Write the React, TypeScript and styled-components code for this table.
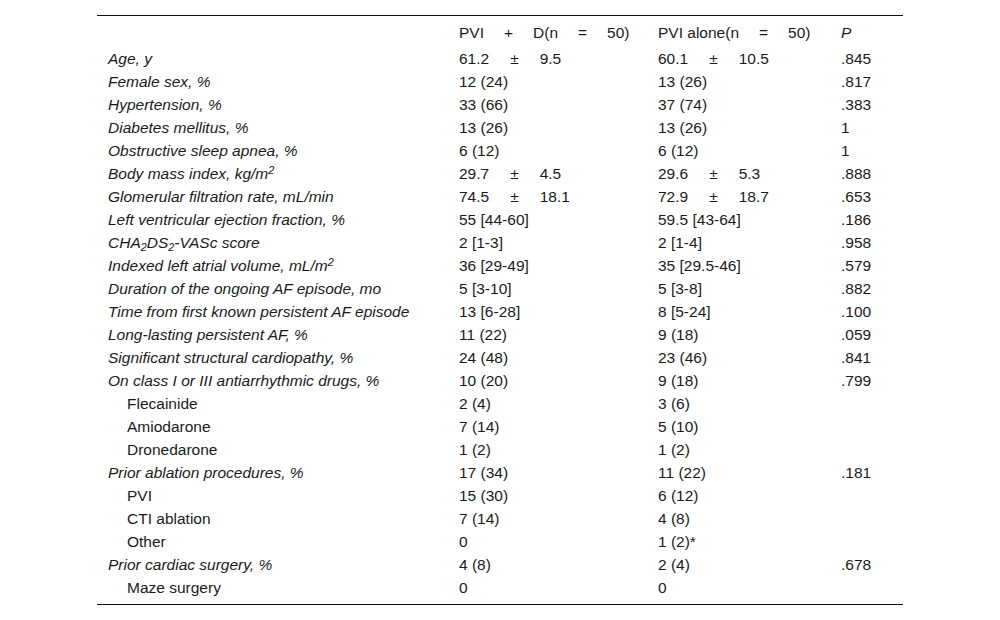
import React from "react";
import styled, { createGlobalStyle } from "styled-components";

const GlobalStyle = createGlobalStyle`
  body {
    margin: 0;
    background: #fff;
    font-family: "Liberation Sans", Arial, sans-serif;
    color: #1a1a1a;
  }
`;

const Page = styled.div`
  padding: 15px 97px;
`;

const Table = styled.table`
  width: 806px;
  border-collapse: collapse;
  border-top: 1px solid #111;
  border-bottom: 1px solid #111;
  font-size: 15.5px;
  table-layout: fixed;

  th,
  td {
    box-sizing: border-box;
  }
`;

const HeadCell = styled.th<{ $w: number; $italic?: boolean }>`
  width: ${(p) => p.$w}px;
  text-align: left;
  font-weight: normal;
  font-style: ${(p) => (p.$italic ? "italic" : "normal")};
  padding: 5px 11px 3px;
  height: 31px;
  line-height: 23px;
  white-space: nowrap;
`;

const Row = styled.tr<{ $last?: boolean }>`
  td {
    padding-bottom: ${(p) => (p.$last ? "5px" : "0")};
    height: ${(p) => (p.$last ? "28px" : "23px")};
  }
`;

const LabelCell = styled.td<{ $sub?: boolean }>`
  padding: 0 11px 0 ${(p) => (p.$sub ? "30px" : "11px")};
  font-style: ${(p) => (p.$sub ? "normal" : "italic")};
  line-height: 23px;
  white-space: nowrap;
`;

const ValueCell = styled.td`
  padding: 0 11px;
  line-height: 23px;
  white-space: nowrap;
`;

const Op = styled.span<{ $gap?: number }>`
  margin: 0 ${(p) => p.$gap ?? 20}px;
`;

const Sub = styled.sub`
  font-size: 0.7em;
  line-height: 0;
  vertical-align: -0.3em;
`;

const Sup = styled.sup`
  font-size: 0.7em;
  line-height: 0;
  vertical-align: 0.5em;
`;

const pm = (a: string, b: string) => (
  <>
    {a}
    <Op $gap={21}>±</Op>
    {b}
  </>
);

interface DataRow {
  label: React.ReactNode;
  sub?: boolean;
  a: React.ReactNode;
  b: React.ReactNode;
  p: string;
}

const rows: DataRow[] = [
  { label: "Age, y", a: pm("61.2", "9.5"), b: pm("60.1", "10.5"), p: ".845" },
  { label: "Female sex, %", a: "12 (24)", b: "13 (26)", p: ".817" },
  { label: "Hypertension, %", a: "33 (66)", b: "37 (74)", p: ".383" },
  { label: "Diabetes mellitus, %", a: "13 (26)", b: "13 (26)", p: "1" },
  { label: "Obstructive sleep apnea, %", a: "6 (12)", b: "6 (12)", p: "1" },
  {
    label: (
      <>
        Body mass index, kg/m<Sup>2</Sup>
      </>
    ),
    a: pm("29.7", "4.5"),
    b: pm("29.6", "5.3"),
    p: ".888",
  },
  { label: "Glomerular filtration rate, mL/min", a: pm("74.5", "18.1"), b: pm("72.9", "18.7"), p: ".653" },
  { label: "Left ventricular ejection fraction, %", a: "55 [44-60]", b: "59.5 [43-64]", p: ".186" },
  {
    label: (
      <>
        CHA<Sub>2</Sub>DS<Sub>2</Sub>-VASc score
      </>
    ),
    a: "2 [1-3]",
    b: "2 [1-4]",
    p: ".958",
  },
  {
    label: (
      <>
        Indexed left atrial volume, mL/m<Sup>2</Sup>
      </>
    ),
    a: "36 [29-49]",
    b: "35 [29.5-46]",
    p: ".579",
  },
  { label: "Duration of the ongoing AF episode, mo", a: "5 [3-10]", b: "5 [3-8]", p: ".882" },
  { label: "Time from first known persistent AF episode", a: "13 [6-28]", b: "8 [5-24]", p: ".100" },
  { label: "Long-lasting persistent AF, %", a: "11 (22)", b: "9 (18)", p: ".059" },
  { label: "Significant structural cardiopathy, %", a: "24 (48)", b: "23 (46)", p: ".841" },
  { label: "On class I or III antiarrhythmic drugs, %", a: "10 (20)", b: "9 (18)", p: ".799" },
  { label: "Flecainide", sub: true, a: "2 (4)", b: "3 (6)", p: "" },
  { label: "Amiodarone", sub: true, a: "7 (14)", b: "5 (10)", p: "" },
  { label: "Dronedarone", sub: true, a: "1 (2)", b: "1 (2)", p: "" },
  { label: "Prior ablation procedures, %", a: "17 (34)", b: "11 (22)", p: ".181" },
  { label: "PVI", sub: true, a: "15 (30)", b: "6 (12)", p: "" },
  { label: "CTI ablation", sub: true, a: "7 (14)", b: "4 (8)", p: "" },
  { label: "Other", sub: true, a: "0", b: "1 (2)*", p: "" },
  { label: "Prior cardiac surgery, %", a: "4 (8)", b: "2 (4)", p: ".678" },
  { label: "Maze surgery", sub: true, a: "0", b: "0", p: "" },
];

const App = () => {
  return (
    <Page>
      <GlobalStyle />
      <Table>
        <thead>
          <tr>
            <HeadCell $w={351} />
            <HeadCell $w={199}>
              PVI<Op>+</Op>D(n<Op>=</Op>50)
            </HeadCell>
            <HeadCell $w={183}>
              PVI alone(n<Op>=</Op>50)
            </HeadCell>
            <HeadCell $w={73} $italic>
              P
            </HeadCell>
          </tr>
        </thead>
        <tbody>
          {rows.map((r, i) => (
            <Row key={i} $last={i === rows.length - 1}>
              <LabelCell $sub={r.sub}>{r.label}</LabelCell>
              <ValueCell>{r.a}</ValueCell>
              <ValueCell>{r.b}</ValueCell>
              <ValueCell>{r.p}</ValueCell>
            </Row>
          ))}
        </tbody>
      </Table>
    </Page>
  );
};

export default App;
